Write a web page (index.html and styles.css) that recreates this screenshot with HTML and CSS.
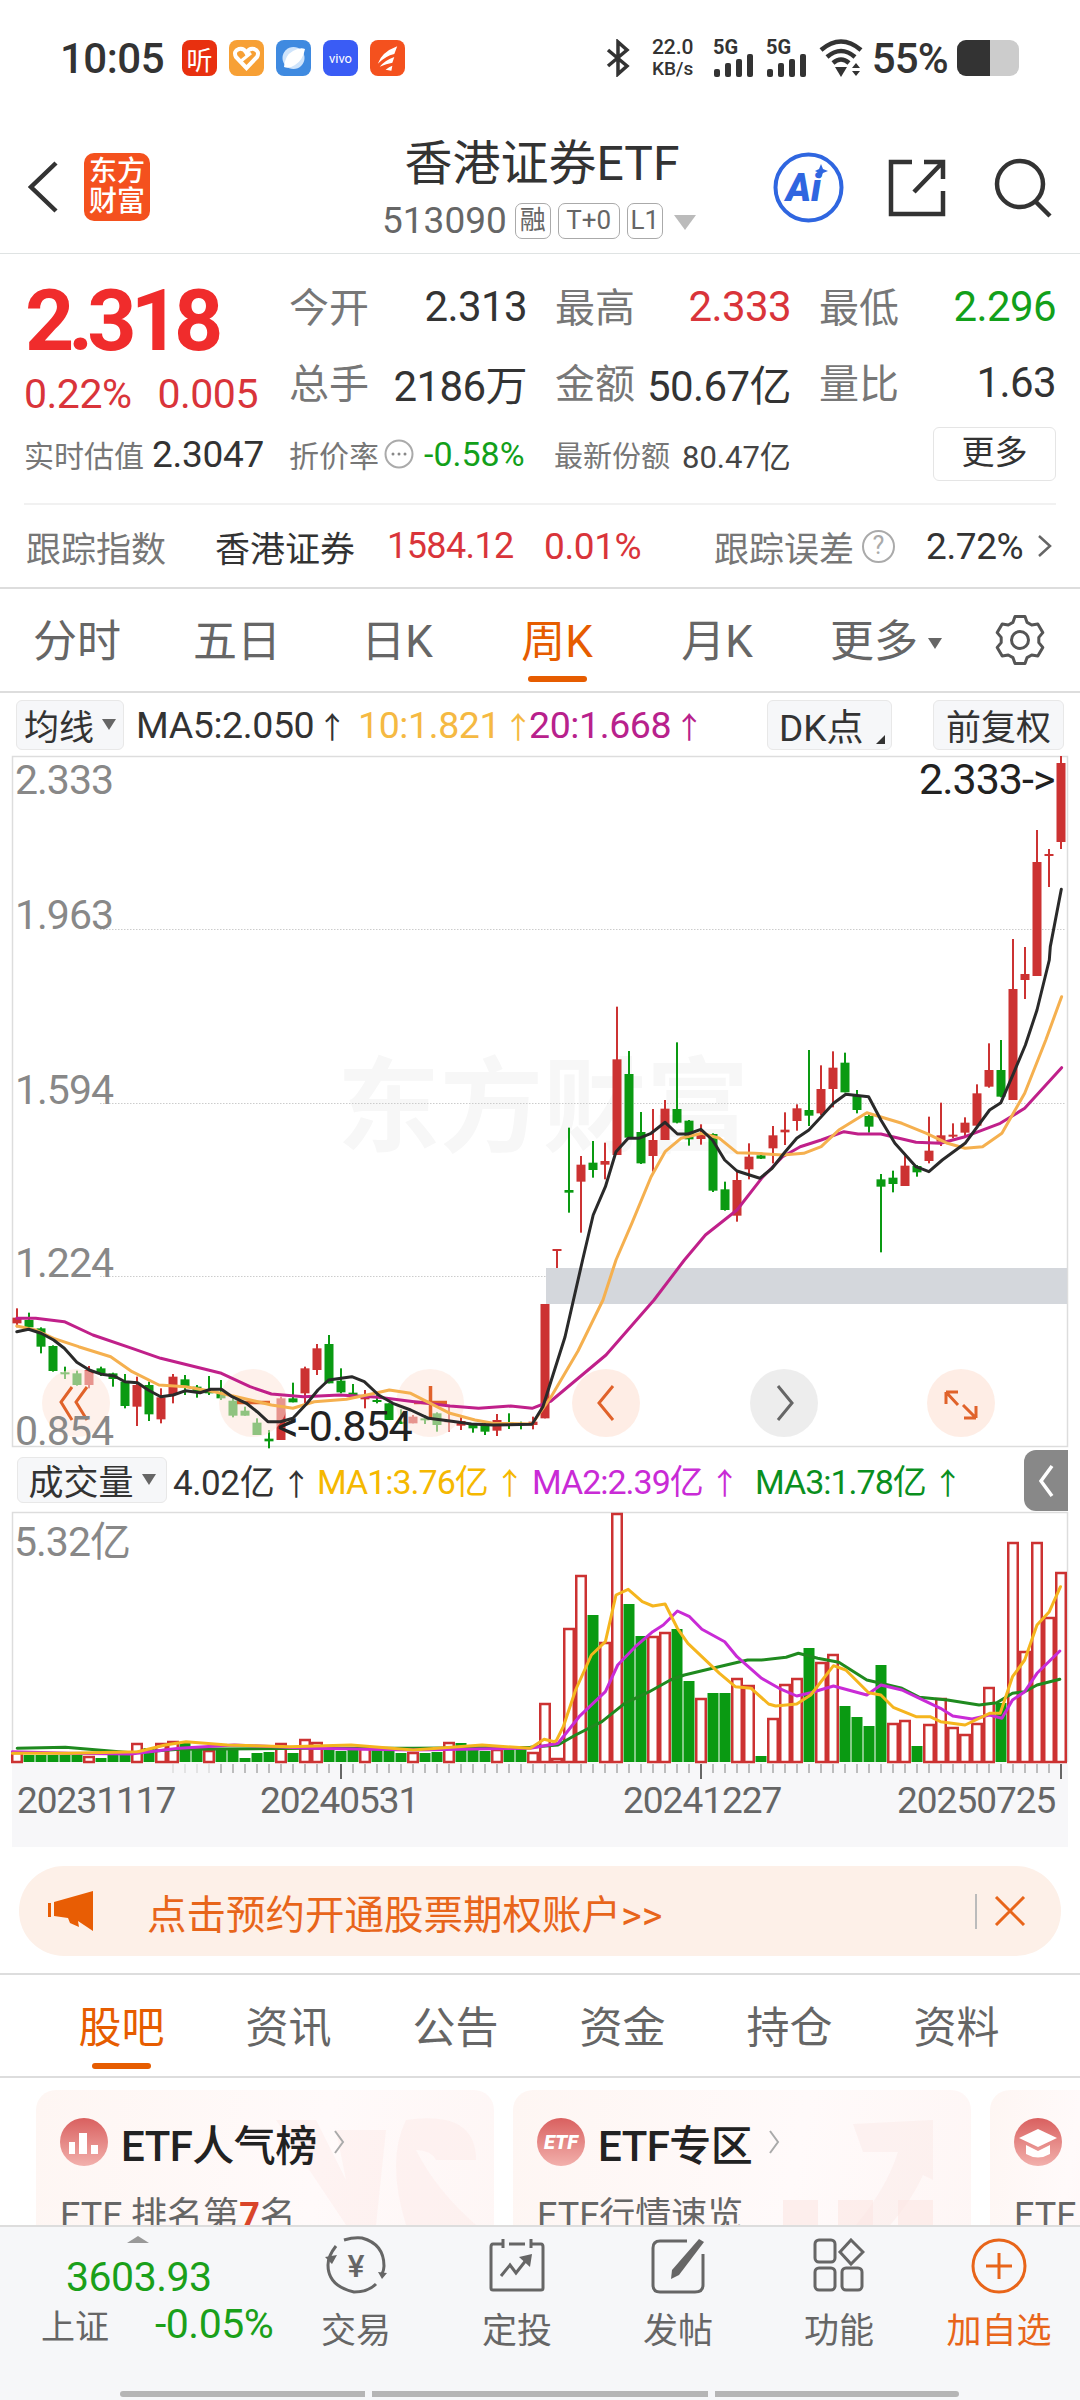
FILE: index.html
```html
<!DOCTYPE html>
<html lang="zh">
<head>
    <meta charset="UTF-8">
    <title>香港证券ETF</title>
    <link rel="stylesheet" href="styles.css">
</head>
<body>
<div class="page">
    <div class="status-bar">
        <div class="status-left">
            <span class="time">10:05</span>
            <span class="app-icon app-ting">听</span>
            <span class="app-icon app-heart">
                <svg width="35" height="36" viewBox="0 0 35 36"><path d="M17.500 28 L7 17 Q4 11 10 9 Q15 8 17.500 13 Q20 8 25 9 Q31 11 28 17 Z" fill="none" stroke="#fff" stroke-width="4"/><path d="M12 21 L22 13" stroke="#fff" stroke-width="3"/></svg>
            </span>
            <span class="app-icon app-ball">
                <svg width="35" height="36" viewBox="0 0 35 36"><circle cx="17.500" cy="18" r="11" fill="#cfe4fb"/><path d="M8 27 Q9 15 17 11 Q24 7 29 9 Q27 20 19 25 Q13 29 8 27 Z" fill="#fff"/></svg>
            </span>
            <span class="app-icon app-vivo">vivo</span>
            <span class="app-icon app-sail">
                <svg width="36" height="36" viewBox="0 0 36 36"><path d="M8 24 Q12 12 28 6 L25 14 Q16 16 8 24 Z M10 27 Q16 20 25 17 L23 23 Q17 24 10 27 Z M16 30 Q20 27 23 26 L22 31 Z" fill="#fff"/></svg>
            </span>
        </div>
        <div class="status-right">
            <svg width="27" height="38" viewBox="0 0 27 38"><path d="M3 11 L22 27 L13 35 L13 3 L22 11 L3 27" fill="none" stroke="#333" stroke-width="3.500"/></svg>
            <span class="net-speed"><b>22.0</b><b class="net-unit">KB/s</b></span>
            <svg class="sim" width="41" height="38" viewBox="0 0 41 38">
                <text x="0" y="15" class="sim-text">5G</text>
                <rect x="1" y="30" width="6" height="8" rx="2"/><rect x="12" y="24" width="6" height="14" rx="2"/><rect x="23" y="20" width="6" height="18" rx="2"/><rect x="34" y="15" width="6" height="23" rx="2"/>
            </svg>
            <svg class="sim" width="41" height="38" viewBox="0 0 41 38">
                <text x="0" y="15" class="sim-text">5G</text>
                <rect x="1" y="30" width="6" height="8" rx="2"/><rect x="12" y="24" width="6" height="14" rx="2"/><rect x="23" y="20" width="6" height="18" rx="2"/><rect x="34" y="15" width="6" height="23" rx="2"/>
            </svg>
            <svg width="44" height="38" viewBox="0 0 44 38"><path d="M2 11 Q22 -6 42 11 M8 18 Q22 6 36 18 M14 24 Q22 17 30 24" fill="none" stroke="#333" stroke-width="4.500"/><path d="M16 28 L28 28 L22 38 Z" fill="#333"/><path d="M37 24 L41 29 L33 29 Z M37 37 L41 32 L33 32 Z" fill="#333"/></svg>
            <span class="battery-text">55%</span>
            <span class="battery"><span class="battery-level"></span></span>
        </div>
    </div>

    <div class="header">
        <svg class="back" width="30" height="52" viewBox="0 0 30 52"><path d="M28 2 L3 26 L28 50" fill="none" stroke="#333" stroke-width="4.500"/></svg>
        <div class="logo">东方<br>财富</div>
        <div class="title-box">
            <div class="title">香港证券ETF</div>
            <div class="subtitle">
                <span class="code">513090</span>
                <span class="tag">融</span><span class="tag tag-wide">T+0</span><span class="tag">L1</span>
                <span class="tri-down"></span>
            </div>
        </div>
        <div class="ai-icon">
            <svg width="71" height="71" viewBox="0 0 71 71"><circle cx="35.500" cy="35.500" r="33" fill="#fff" stroke="#2f66e0" stroke-width="4"/><text x="13" y="49" class="ai-text">Ai</text><path d="M48 12 L50 17 L55 19 L50 21 L48 25 L46 21 L42 19 L46 17 Z" fill="#2f66e0"/></svg>
        </div>
        <svg class="share" width="58" height="58" viewBox="0 0 58 58"><path d="M24 3 L3 3 L3 55 L55 55 L55 32" fill="none" stroke="#333" stroke-width="4.500"/><path d="M26 33 L55 3 M36 3 L55 3 L55 20" fill="none" stroke="#333" stroke-width="4.500"/></svg>
        <svg class="search" width="60" height="60" viewBox="0 0 60 60"><circle cx="27" cy="26" r="23" fill="none" stroke="#333" stroke-width="4.500"/><path d="M43 44 L57 58" stroke="#333" stroke-width="4.500"/></svg>
    </div>

    <div class="quote">
        <div class="quote-top">
            <div class="price-box">
                <div class="price">2.318</div>
                <div class="change"><span>0.22%</span><span>0.005</span></div>
            </div>
            <div class="stats">
                <div class="stat"><span class="stat-label">今开</span><span class="stat-value">2.313</span></div>
                <div class="stat"><span class="stat-label">最高</span><span class="stat-value up">2.333</span></div>
                <div class="stat"><span class="stat-label">最低</span><span class="stat-value down">2.296</span></div>
                <div class="stat"><span class="stat-label">总手</span><span class="stat-value">2186万</span></div>
                <div class="stat"><span class="stat-label">金额</span><span class="stat-value">50.67亿</span></div>
                <div class="stat"><span class="stat-label">量比</span><span class="stat-value">1.63</span></div>
            </div>
        </div>
        <div class="quote-extra">
            <div class="extra-est"><span class="small-label">实时估值</span><span class="extra-num">2.3047</span></div>
            <div class="extra-disc">
                <span class="small-label">折价率</span>
                <svg width="30" height="30" viewBox="0 0 30 30"><circle cx="15" cy="15" r="13.500" fill="none" stroke="#aaa" stroke-width="2"/><circle cx="9" cy="15" r="1.500" fill="#888"/><circle cx="15" cy="15" r="1.500" fill="#888"/><circle cx="21" cy="15" r="1.500" fill="#888"/></svg>
                <span class="extra-rate">-0.58%</span>
            </div>
            <div class="extra-share"><span class="small-label share-label">最新份额</span><span class="share-num">80.47亿</span></div>
            <div class="more-btn">更多</div>
        </div>
    </div>

    <div class="track">
        <span class="track-label">跟踪指数</span>
        <span class="track-name">香港证券</span>
        <span class="track-num track-index up">1584.12</span>
        <span class="track-num up">0.01%</span>
        <span class="track-err">跟踪误差<i class="help">?</i></span>
        <span class="track-num">2.72%</span>
        <svg width="18" height="32" viewBox="0 0 18 32"><path d="M3 6 L14 16 L3 26" fill="none" stroke="#666" stroke-width="2.500"/></svg>
    </div>

    <div class="period-tabs">
        <span class="period">分时</span>
        <span class="period">五日</span>
        <span class="period">日K</span>
        <span class="period period-active">周K</span>
        <span class="period">月K</span>
        <span class="period period-more">更多<i class="tri-small"></i></span>
        <svg class="gear" width="52" height="52" viewBox="-26 -26 52 52">
            <polygon points="-5,-23.500 5,-23.500 7.100,-17.600 11.700,-15 17.800,-16.100 22.800,-7.400 18.800,-2.600 18.800,2.600 22.800,7.400 17.800,16.100 11.700,15 7.100,17.600 5,23.500 -5,23.500 -7.100,17.600 -11.700,15 -17.800,16.100 -22.800,7.400 -18.800,2.600 -18.800,-2.600 -22.800,-7.400 -17.800,-16.100 -11.700,-15 -7.100,-17.600" fill="none" stroke="#555" stroke-width="3" stroke-linejoin="round"/>
            <circle r="8.500" fill="none" stroke="#555" stroke-width="3"/>
        </svg>
    </div>

    <div class="ma-row">
        <span class="select-box box-ma">均线<i class="tri-small"></i></span>
        <span class="ma-item ma-first">MA5:2.050<i class="arrow">↑</i></span>
        <span class="ma-item ma-orange">10:1.821<i class="arrow">↑</i></span>
        <span class="ma-item ma-pink">20:1.668<i class="arrow">↑</i></span>
        <span class="select-box box-dk">DK点<i class="corner"></i></span>
        <span class="select-box box-fq">前复权</span>
    </div>

    <svg class="chart-svg kline-svg" width="1080" height="691" viewBox="0 756 1080 691">
        <rect x="12.500" y="756.500" width="1055" height="690" fill="#fff" stroke="#ddd" stroke-width="1.500"/>
        <text x="337" y="1144" class="watermark">东方财富</text>
        <path d="M100 929.500 H1066 M100 1103.500 H1066 M100 1276.500 H1066" stroke="#ccc" stroke-dasharray="1.500 1.500"/>
        <g id="kline-candles"></g>
        <rect x="546" y="1268" width="521" height="36" fill="#d4d7dc"/>
        <g class="float-btns">
            <ellipse cx="76" cy="1403" rx="34" ry="34" fill="#fde6da" opacity=".55"/>
            <ellipse cx="253" cy="1403" rx="34" ry="34" fill="#fde6da" opacity=".55"/>
            <ellipse cx="430" cy="1403" rx="34" ry="34" fill="#fde6da" opacity=".55"/>
            <ellipse cx="606" cy="1403" rx="34" ry="34" fill="#fde6da" opacity=".7"/>
            <ellipse cx="784" cy="1403" rx="34" ry="34" fill="#e6e6e6" opacity=".7"/>
            <ellipse cx="961" cy="1403" rx="34" ry="34" fill="#fde6da" opacity=".7"/>
            <path d="M72 1387 L61 1402 L72 1420 M87 1387 L76 1402 L87 1420" fill="none" stroke="#e0622a" stroke-width="3"/>
            <path d="M237 1402.500 H270" stroke="#e0622a" stroke-width="3.500"/>
            <path d="M414 1402.500 H447 M430.500 1386 V1418" stroke="#e0622a" stroke-width="3.500"/>
            <path d="M613 1386 L599 1403 L613 1420" fill="none" stroke="#e0622a" stroke-width="3"/>
            <path d="M778 1386 L792 1403 L778 1420" fill="none" stroke="#666" stroke-width="3"/>
            <path d="M946 1392 L946 1404 M946 1392 L958 1392 M946 1392 L958 1405 M976 1418 L976 1406 M976 1418 L964 1418 M976 1418 L963 1405" fill="none" stroke="#e0622a" stroke-width="3"/>
        </g>
        <g id="kline-lines"></g>
        <g class="axis-labels">
            <text x="15" y="794">2.333</text>
            <text x="15" y="929">1.963</text>
            <text x="15" y="1104">1.594</text>
            <text x="15" y="1277">1.224</text>
            <text x="15" y="1445">0.854</text>
        </g>
        <text x="919" y="794" class="extreme">2.333-&gt;</text>
        <text x="277" y="1441" class="extreme">&lt;-0.854</text>
    </svg>

    <div class="vol-row">
        <span class="select-box box-vol">成交量<i class="tri-small"></i></span>
        <span class="ma-item vol-now">4.02亿<i class="arrow">↑</i></span>
        <span class="ma-item vol-ma1">MA1:3.76亿<i class="arrow">↑</i></span>
        <span class="ma-item vol-ma2">MA2:2.39亿<i class="arrow">↑</i></span>
        <span class="ma-item vol-ma3">MA3:1.78亿<i class="arrow">↑</i></span>
        <span class="collapse-tab">
            <svg width="18" height="36" viewBox="0 0 18 36"><path d="M15 3 L4 18 L15 33" fill="none" stroke="#fff" stroke-width="3.500"/></svg>
        </span>
    </div>

    <svg class="chart-svg vol-svg" width="1080" height="335" viewBox="0 1512 1080 335">
        <rect x="12" y="1762" width="1056" height="85" fill="#f7f7f9"/>
        <path d="M12.500 1762 V1512.500 H1067.500 V1762" fill="#fff" stroke="#ddd" stroke-width="1.500"/>
        <g id="vol-bars"></g>
        <g id="vol-lines"></g>
        <g id="vol-ticks"></g>
        <text x="14" y="1556" class="axis-vol">5.32亿</text>
        <g class="date-labels">
            <text x="17" y="1813">20231117</text>
            <text x="260" y="1813">20240531</text>
            <text x="623" y="1813">20241227</text>
            <text x="897" y="1813">20250725</text>
        </g>
    </svg>

    <div class="banner">
        <svg class="horn" width="46" height="40" viewBox="0 0 46 40"><path d="M0 12 H3 V26 H0 Z M6 11 L45 0 V40 L30 30 L31 36 L22 32 L20 27 L6 25 Z" fill="#e85d04"/></svg>
        <span class="banner-text">点击预约开通股票期权账户&gt;&gt;</span>
        <span class="banner-line"></span>
        <svg width="32" height="30" viewBox="0 0 32 30"><path d="M2 1 L30 29 M30 1 L2 29" stroke="#e8651a" stroke-width="3"/></svg>
    </div>

    <div class="info-tabs">
        <span class="info-tab info-active">股吧</span>
        <span class="info-tab">资讯</span>
        <span class="info-tab">公告</span>
        <span class="info-tab">资金</span>
        <span class="info-tab">持仓</span>
        <span class="info-tab">资料</span>
    </div>

    <div class="cards">
        <div class="card">
            <svg class="card-bg" width="458" height="135" viewBox="0 0 458 135"><path d="M240 30 L310 135 L340 135 L350 40 L300 40 L310 90 L280 30 Z M370 30 Q440 20 440 70 L400 70 Q395 60 380 60 Q400 100 440 135 L370 135 Q350 70 370 30 Z" fill="#fbe6e3" opacity=".35"/></svg>
            <div class="card-title">
                <span class="card-icon">
                    <svg width="48" height="48" viewBox="0 0 48 48"><path d="M9 36 V24 H15 V36 Z M19 36 V15 H27 V36 Z M31 36 V27 H38 V36 Z" fill="#fff"/></svg>
                </span>
                <span class="card-name">ETF人气榜</span>
                <svg width="12" height="26" viewBox="0 0 12 26"><path d="M2 2 L10 13 L2 24" fill="none" stroke="#aaa" stroke-width="2"/></svg>
            </div>
            <div class="card-sub">ETF 排名第<b>7</b>名</div>
        </div>
        <div class="card">
            <svg class="card-bg" width="458" height="135" viewBox="0 0 458 135"><path d="M340 34 L420 30 L420 90 L410 85 Q390 130 340 170 L320 160 Q370 110 385 62 L350 62 Z" fill="#fbe6e3" opacity=".4"/><path d="M270 110 H305 V135 H270 Z M325 110 H360 V135 H325 Z M385 110 H420 V135 H385 Z" fill="#fbe6e3" opacity=".6"/></svg>
            <div class="card-title">
                <span class="card-icon"><i class="etf-mark">ETF</i></span>
                <span class="card-name">ETF专区</span>
                <svg width="12" height="26" viewBox="0 0 12 26"><path d="M2 2 L10 13 L2 24" fill="none" stroke="#aaa" stroke-width="2"/></svg>
            </div>
            <div class="card-sub">ETF行情速览</div>
        </div>
        <div class="card card-cut">
            <div class="card-title">
                <span class="card-icon">
                    <svg width="48" height="48" viewBox="0 0 48 48"><path d="M5 20 L24 11 L43 20 L24 29 Z" fill="#fff"/><path d="M12 27 L24 33 L36 27 V36 Q24 43 12 36 Z" fill="#fff"/></svg>
                </span>
            </div>
            <div class="card-sub">ETF</div>
        </div>
    </div>

    <div class="bottom-bar">
        <div class="index-box">
            <i class="tri-up"></i>
            <div class="index-num">3603.93</div>
            <div class="index-row"><span class="index-name">上证</span><span class="index-rate">-0.05%</span></div>
        </div>
        <div class="nav-item nav-trade">
            <svg width="64" height="58" viewBox="0 0 64 58"><path d="M12 10 Q4 20 4 29 Q4 50 30 56 Q44 56 52 48" fill="none" stroke="#666" stroke-width="3"/><path d="M20 4 Q30 1 38 2 Q60 8 60 30 Q60 34 58 38" fill="none" stroke="#666" stroke-width="3"/><path d="M1 21 L8 28 L13 19 Z M54 36 L63 37 L58 43 Z" fill="#666"/><text x="32" y="41" class="yen">¥</text></svg>
            <span>交易</span>
        </div>
        <div class="nav-item nav-plan">
            <svg width="56" height="54" viewBox="0 0 56 54"><path d="M14 6 H4 Q2 6 2 9 V50 Q2 52 4 52 H52 Q54 52 54 50 V9 Q54 6 52 6 H42 M20 6 H36 M14 1 V10 M42 1 V10" fill="none" stroke="#666" stroke-width="3"/><path d="M12 38 L21 27 L27 35 L38 21" fill="none" stroke="#666" stroke-width="3"/><path d="M30 19 L43 16 L41 29 Z" fill="#666"/></svg>
            <span>定投</span>
        </div>
        <div class="nav-item nav-post">
            <svg width="54" height="56" viewBox="0 0 54 56"><path d="M36 3 H9 Q2 3 2 10 V47 Q2 54 9 54 H44 Q52 54 52 47 V16" fill="none" stroke="#666" stroke-width="3"/><path d="M48 1 L53 4 L28 37 L20 41 L21 32 Z" fill="#666"/></svg>
            <span>发帖</span>
        </div>
        <div class="nav-item nav-func">
            <svg width="52" height="54" viewBox="0 0 52 54"><rect x="2" y="2" width="20" height="22" rx="4" fill="none" stroke="#666" stroke-width="3"/><path d="M38 2 L50 14 L38 26 L27 14 Z" fill="none" stroke="#666" stroke-width="3"/><rect x="2" y="30" width="20" height="22" rx="4" fill="none" stroke="#666" stroke-width="3"/><rect x="29" y="30" width="20" height="22" rx="4" fill="none" stroke="#666" stroke-width="3"/></svg>
            <span>功能</span>
        </div>
        <div class="nav-item nav-add">
            <svg width="56" height="56" viewBox="0 0 56 56"><circle cx="28" cy="28" r="26" fill="none" stroke="#e8651a" stroke-width="3"/><path d="M15 28 H41 M28 15 V41" stroke="#e8651a" stroke-width="3"/></svg>
            <span>加自选</span>
        </div>
        <div class="home-bar"><i></i><i></i><i></i></div>
    </div>
</div>
<script src="chart.js"></script>
</body>
</html>
```

FILE: styles.css
```css
* {
    box-sizing: border-box;
}

html, body {
    margin: 0;
    padding: 0;
    background: #fff;
}

body {
    font-family: Roboto, "Noto Sans CJK SC", sans-serif;
    color: #333;
}

i {
    font-style: normal;
}

.page {
    width: 1080px;
    height: 2400px;
    overflow: hidden;
    display: flex;
    flex-direction: column;
}

.up {
    color: #d9343a;
}

.down {
    color: #12a01a;
}

/* status bar */
.status-bar {
    height: 116px;
    flex: none;
    display: flex;
    align-items: center;
    justify-content: space-between;
    padding: 0 61px 0 60px;
}

.status-left,
.status-right {
    display: flex;
    align-items: center;
}

.time {
    font-size: 42px;
    font-weight: 500;
    width: 122px;
    letter-spacing: -.5px;
}

.app-icon {
    width: 35px;
    height: 36px;
    border-radius: 8px;
    margin-right: 12px;
    display: flex;
    align-items: center;
    justify-content: center;
    color: #fff;
}

.app-ting {
    background: #e8300f;
    font-size: 26px;
}

.app-heart {
    background: #f7a035;
}

.app-ball {
    background: #3f8ae0;
}

.app-vivo {
    background: #3a5cf5;
    font-size: 13px;
}

.app-sail {
    background: #f4511e;
    margin-right: 0;
}

.net-speed {
    display: flex;
    flex-direction: column;
    align-items: center;
    width: 44px;
    margin: 0 18px 0 19px;
    font-size: 21px;
    line-height: 21px;
}

.net-speed b {
    font-weight: 500;
}

.net-speed .net-unit {
    font-size: 19px;
}

.sim {
    margin-right: 12px;
    fill: #333;
    overflow: visible;
}

.sim-text {
    font-size: 20px;
    font-weight: 700;
}

.battery-text {
    font-size: 42px;
    font-weight: 500;
    margin: 0 9px 0 9px;
    letter-spacing: -.8px;
}

.battery {
    width: 62px;
    height: 36px;
    border-radius: 9px;
    background: #ccc;
    overflow: hidden;
}

.battery-level {
    display: block;
    width: 33px;
    height: 36px;
    background: #333;
}

/* header */
.header {
    height: 138px;
    flex: none;
    display: flex;
    align-items: flex-start;
    padding: 0 30px 0 28px;
    border-bottom: 1.5px solid #dfe3e3;
}

.back {
    margin-top: 45px;
    flex: none;
}

.logo {
    flex: none;
    width: 66px;
    height: 68px;
    margin: 37px 0 0 26px;
    padding-top: 4px;
    background: #f4511e;
    border-radius: 10px;
    color: #fff;
    font-size: 28px;
    font-weight: 500;
    line-height: 30px;
    text-align: center;
}

.title-box {
    width: 462px;
    margin-left: 161px;
    text-align: center;
    flex: none;
}

.title {
    font-size: 48px;
    line-height: 56px;
    margin-top: 20px;
}

.subtitle {
    display: flex;
    align-items: center;
    margin: 11px 0 0 71px;
    color: #666;
}

.code {
    font-size: 37px;
    line-height: 36px;
    margin-right: 8px;
}

.tag {
    width: 36px;
    height: 36px;
    border: 1.5px solid #aaa;
    border-radius: 7px;
    margin-right: 7px;
    font-size: 26px;
    line-height: 32px;
    text-align: center;
    color: #666;
    flex: none;
}

.tag-wide {
    width: 62px;
}

.tri-down {
    width: 0;
    height: 0;
    margin: 2px 0 0 4px;
    border-left: 11px solid transparent;
    border-right: 11px solid transparent;
    border-top: 15px solid #bbb;
}

.ai-icon {
    margin-top: 36px;
    height: 71px;
    flex: none;
}

.ai-text {
    font-size: 38px;
    font-weight: 900;
    font-style: italic;
    fill: #2f66e0;
}

.share {
    margin: 43px 0 0 44px;
    flex: none;
}

.search {
    margin: 42px 0 0 47px;
    flex: none;
}

/* quote */
.quote {
    flex: none;
    height: 251px;
    margin: 0 24px;
    border-bottom: 2px solid #f1f1f1;
}

.quote-top {
    display: flex;
    height: 165px;
}

.price-box {
    width: 265px;
    padding-top: 17px;
}

.price {
    font-size: 86px;
    font-weight: 700;
    line-height: 100px;
    letter-spacing: -6px;
    color: #f02c2c;
    padding-left: 1px;
}

.change {
    display: flex;
    gap: 26px;
    font-size: 41px;
    line-height: 46px;
    letter-spacing: -.5px;
    color: #d9343a;
}

.stats {
    width: 767px;
    padding-top: 13px;
    display: grid;
    grid-template-columns: 238px 236px 237px;
    grid-auto-rows: 76px;
    column-gap: 28px;
}

.stat {
    display: flex;
    align-items: center;
    justify-content: space-between;
}

.stat-label {
    font-size: 40px;
    color: #777;
}

.stat-value {
    font-size: 42px;
    letter-spacing: -.6px;
    padding-top: 2px;
}

.quote-extra {
    display: flex;
    align-items: center;
    height: 70px;
}

.small-label {
    font-size: 30px;
    color: #777;
}

.extra-est {
    width: 265px;
    display: flex;
    align-items: center;
    gap: 8px;
}

.extra-num {
    font-size: 37px;
    letter-spacing: -.3px;
}

.extra-disc {
    width: 265px;
    display: flex;
    align-items: center;
    gap: 5px;
}

.extra-rate {
    font-size: 34px;
    color: #12a01a;
    margin-left: 5px;
}

.extra-share {
    width: 379px;
    display: flex;
    align-items: center;
}

.share-label {
    font-size: 29px;
    width: 128px;
}

.share-num {
    font-size: 31px;
    color: #444;
}

.more-btn {
    width: 123px;
    height: 54px;
    border: 1.5px solid #e5e5e5;
    border-radius: 6px;
    font-size: 33px;
    line-height: 50px;
    text-align: center;
}

/* tracking row */
.track {
    flex: none;
    height: 84px;
    display: grid;
    grid-template-columns: 189px 172px 157px 170px 212px 110px 18px;
    align-items: center;
    padding-left: 26px;
    border-bottom: 2px solid #ddd;
}

.track-label,
.track-err {
    font-size: 35px;
    color: #777;
    display: flex;
    align-items: center;
}

.track-name {
    font-size: 35px;
}

.track-num {
    font-size: 37px;
    letter-spacing: -.4px;
}

.track-index {
    font-size: 36px;
    letter-spacing: -.6px;
}

.help {
    width: 33px;
    height: 33px;
    margin-left: 8px;
    border: 2.5px solid #aaa;
    border-radius: 50%;
    font-size: 25px;
    line-height: 28px;
    text-align: center;
    color: #aaa;
}

/* period tabs */
.period-tabs {
    flex: none;
    height: 104px;
    display: flex;
    align-items: center;
    margin-left: -3px;
    border-bottom: 2px solid #ddd;
}

.period {
    width: 160px;
    height: 102px;
    font-size: 44px;
    line-height: 106px;
    text-align: center;
    color: #666;
    position: relative;
    flex: none;
}

.period-active {
    color: #e65c00;
}

.period-active::after {
    content: "";
    position: absolute;
    left: 51px;
    top: 87px;
    width: 59px;
    height: 6px;
    border-radius: 3px;
    background: #e65c00;
}

.period-more {
    margin-left: 9px;
}

.tri-small {
    display: inline-block;
    margin-left: 10px;
    vertical-align: 8px;
    border-left: 7px solid transparent;
    border-right: 7px solid transparent;
    border-top: 11px solid #666;
}

.gear {
    margin-left: 28px;
    flex: none;
}

/* MA rows */
.ma-row,
.vol-row {
    flex: none;
    display: flex;
    align-items: center;
    position: relative;
}

.ma-row {
    height: 63px;
    font-size: 37.500px;
}

.vol-row {
    height: 65px;
    font-size: 34px;
}

.select-box {
    flex: none;
    height: 50px;
    background: #f6f7f9;
    border: 1.5px solid #e8e8e8;
    border-radius: 6px;
    display: flex;
    align-items: center;
    justify-content: center;
    color: #333;
    position: relative;
    font-size: 35px;
}

.box-ma {
    width: 108px;
    margin-left: 16px;
}

.box-ma .tri-small,
.box-vol .tri-small {
    margin-left: 8px;
    vertical-align: baseline;
}

.box-dk {
    width: 125px;
    position: absolute;
    left: 767px;
    font-size: 37px;
    justify-content: flex-start;
    padding-left: 11px;
}

.corner {
    position: absolute;
    right: 6px;
    bottom: 5px;
    border-left: 9px solid transparent;
    border-bottom: 9px solid #333;
}

.box-fq {
    width: 131px;
    position: absolute;
    left: 933px;
}

.ma-item {
    white-space: nowrap;
    letter-spacing: -.4px;
}

.arrow {
    font-size: 30px;
    margin-left: 3px;
}

.ma-first {
    margin-left: 12px;
    width: 222px;
}

.ma-orange {
    color: #f5b942;
    width: 171px;
}

.ma-pink {
    color: #b8218c;
}

.chart-svg {
    display: block;
    flex: none;
    overflow: visible;
}

.watermark {
    font-size: 103px;
    font-weight: 700;
    fill: #f7f7f7;
}

.axis-labels text,
.axis-vol {
    font-size: 41px;
    letter-spacing: -1px;
    fill: #888;
}

.extreme {
    font-size: 43px;
    letter-spacing: -1px;
    fill: #222;
}

.box-vol {
    width: 150px;
    height: 46px;
    margin-left: 17px;
}

.vol-now {
    margin-left: 6px;
    width: 144px;
    font-size: 35px;
}

.vol-ma1,
.vol-ma2,
.vol-ma3 {
    letter-spacing: -1px;
}

.vol-row .arrow {
    margin-left: 7px;
}

.vol-ma1 {
    color: #f5b800;
    width: 215px;
}

.vol-ma2 {
    color: #c92bd6;
    width: 223px;
}

.vol-ma3 {
    color: #0a8f1e;
}

.collapse-tab {
    position: absolute;
    left: 1024px;
    top: 3px;
    width: 44px;
    height: 61px;
    background: #888;
    border-radius: 12px 0 0 12px;
    display: flex;
    align-items: center;
    justify-content: center;
}

.date-labels text {
    font-size: 37px;
    letter-spacing: -1px;
    fill: #666;
}

/* banner */
.banner {
    flex: none;
    height: 90px;
    margin: 19px 19px 0;
    padding-left: 29px;
    background: #fdf0e8;
    border-radius: 45px;
    display: flex;
    align-items: center;
}

.horn {
    margin-right: 53px;
}

.banner-text {
    width: 828px;
    font-size: 39.500px;
    color: #e8651a;
}

.banner-line {
    width: 1.500px;
    height: 35px;
    background: #bbb;
    margin-right: 17px;
}

/* info tabs */
.info-tabs {
    flex: none;
    height: 105px;
    margin-top: 17px;
    padding-left: 38px;
    display: flex;
    border-top: 2px solid #ddd;
    border-bottom: 2px solid #ddd;
}

.info-tab {
    width: 167px;
    font-size: 43px;
    line-height: 106px;
    text-align: center;
    color: #666;
    position: relative;
}

.info-active {
    color: #e65c00;
}

.info-active::after {
    content: "";
    position: absolute;
    left: 54px;
    top: 88px;
    width: 59px;
    height: 6px;
    border-radius: 3px;
    background: #e65c00;
}

/* cards */
.cards {
    flex: none;
    height: 147px;
    padding: 12px 0 0 36px;
    display: flex;
    gap: 19px;
    overflow: hidden;
}

.card {
    flex: none;
    width: 458px;
    height: 200px;
    padding: 28px 0 0 24px;
    border-radius: 20px;
    background: linear-gradient(100deg, #fef6f3, #fffafa 60%, #fef6f5);
    position: relative;
}

.card-bg {
    position: absolute;
    left: 0;
    top: 0;
}

.card-cut {
    width: 120px;
}

.card-title {
    display: flex;
    align-items: center;
    height: 48px;
    position: relative;
}

.card-icon {
    width: 48px;
    height: 48px;
    border-radius: 50%;
    background: linear-gradient(#d9605f, #f2b0ac);
    flex: none;
    display: flex;
    align-items: center;
    justify-content: center;
}

.etf-mark {
    font-size: 20px;
    font-weight: 900;
    font-style: italic;
    color: #fff;
}

.card-name {
    margin: 0 16px 0 13px;
    font-size: 42px;
    font-weight: 500;
    letter-spacing: -.5px;
    color: #222;
}

.card-sub {
    margin-top: 28px;
    font-size: 36px;
    line-height: 44px;
    color: #666;
    position: relative;
}

.card-sub b {
    color: #d9452a;
}

/* bottom bar */
.bottom-bar {
    flex: 1;
    position: relative;
    display: flex;
    background: #f6f7f9;
    border-top: 2px solid #ddd;
}

.index-box {
    width: 322px;
    padding-left: 41px;
    position: relative;
}

.tri-up {
    position: absolute;
    left: 127px;
    top: 9px;
    border-left: 11px solid transparent;
    border-right: 11px solid transparent;
    border-bottom: 7px solid #999;
}

.index-num {
    margin: 28px 0 0 25px;
    font-size: 41px;
    line-height: 44px;
    letter-spacing: -.5px;
    color: #1aa01a;
}

.index-row {
    display: flex;
    align-items: center;
    height: 50px;
}

.index-name {
    font-size: 34px;
    width: 114px;
    color: #666;
}

.index-rate {
    font-size: 41px;
    letter-spacing: -.5px;
    color: #1aa01a;
}

.nav-item {
    position: absolute;
    top: 9px;
    display: flex;
    flex-direction: column;
    align-items: center;
    font-size: 35px;
    color: #666;
}

.nav-item span {
    position: absolute;
    top: 72px;
    white-space: nowrap;
    line-height: 48px;
}

.nav-trade {
    left: 324px;
}

.nav-plan {
    left: 489px;
    top: 11px;
}

.nav-post {
    left: 651px;
    top: 11px;
}

.nav-func {
    left: 813px;
    top: 11px;
}

.nav-add {
    left: 971px;
    top: 11px;
    color: #e8651a;
}

.nav-plan span,
.nav-post span,
.nav-func span,
.nav-add span {
    top: 70px;
}

.yen {
    font-size: 32px;
    font-weight: 500;
    fill: #666;
    text-anchor: middle;
}

.home-bar {
    position: absolute;
    left: 120px;
    top: 164px;
    display: flex;
    gap: 7px;
}

.home-bar i {
    display: block;
    width: 336px;
    height: 6px;
    background: #b5b5b5;
}

.home-bar i:first-child {
    width: 245px;
    border-radius: 3px 0 0 3px;
}

.home-bar i:last-child {
    width: 244px;
    border-radius: 0 3px 3px 0;
}
```

FILE: chart.js
```js
const RED = '#cc3232';
const GREEN = '#0a9a12';

// candle rows: colour, high, body top, body bottom, low (traced in 1/3 px above a base y)
const leftCandles = [
    ['r',205,233,250,262],['g',218,240,262,270],['g',262,265,320,340],['g',316,318,393,395],['g',380,397,402,417],
    ['g',392,400,435,437],['r',378,390,435,445],['g',380,385,400,408],['g',398,400,417,440],['g',402,425,498,505],
    ['r',410,435,500,558],['g',425,435,523,543],['r',445,472,538,550],['r',402,410,465,490],['g',405,418,438,465],
    ['g',435,440,458,473],['g',408,452,460,465],['g',420,460,475,480],['g',475,482,527,532],['g',500,512,527,527],
    ['g',535,548,585,585],['g',570,596,604,625],['r',470,475,600,600],['g',428,475,487,487],['r',380,385,460,490],
    ['r',312,325,390,405],['g',285,312,430,430],['g',385,422,457,460],['g',432,458,465,467],['r',450,472,475,505],
    ['g',465,480,483,490],['g',490,490,540,540],['g',508,545,548,552],['r',525,530,550,550],['g',525,535,540,552],
    ['g',517,520,555,575],['r',495,540,547,575],['r',530,543,557,570],['g',550,553,565,578],['g',548,555,575,585],
    ['r',522,540,572,588],['g',520,547,549,567],['g',545,549,551,568],['r',530,545,555,568],['r',192,192,535,535]
];
const rightCandles = [
    ['r',867,867,873,924],['g',503,690,698,758],['r',588,614,665,818],['g',543,608,630,653],['r',548,603,614,658],
    ['r',140,298,585,585],['g',273,342,533,533],['g',456,516,610,612],['r',447,540,588,635],['r',420,446,540,540],
    ['g',247,447,488,490],['g',480,482,538,557],['r',493,525,537,554],['g',520,522,692,696],['g',665,688,750,752],
    ['r',635,660,767,785],['r',550,590,628,658],['g',578,586,596,597],['r',498,526,565,610],['r',457,509,517,555],
    ['r',433,445,483,512],['g',270,450,467,498],['r',316,387,460,465],['r',274,323,387,442],['g',278,308,397,397],
    ['g',390,405,450,460],['g',460,468,500,518],['g',642,658,680,877],['g',632,653,672,697],['r',580,617,678,678],
    ['g',615,618,637,650],['r',470,572,603,610],['r',428,526,545,558],['r',490,524,529,535],['r',472,488,518,530],
    ['r',373,400,497,497],['r',250,330,380,383],['g',240,330,410,412],['r',-63,87,420,420],['r',-39,42,60,117],
    ['r',-390,-294,48,48],['r',-333,-318,-312,-219],['r',-612,-591,-354,-333]
];

// volume bar tops, page px
const volumes = [
    ['r',1752],['g',1755],['g',1755],['g',1755],['g',1755],['g',1755],['r',1756],['g',1758],['g',1755],['g',1755],
    ['r',1743],['g',1748],['r',1743],['r',1741],['g',1742],['g',1750],['r',1750],['g',1748],['g',1749],['g',1758],
    ['g',1753],['g',1752],['r',1743],['g',1753],['r',1739],['r',1742],['g',1748],['g',1751],['g',1748],['r',1748],
    ['g',1748],['g',1751],['g',1753],['r',1752],['g',1753],['g',1752],['r',1742],['g',1743],['g',1750],['g',1751],
    ['r',1749],['g',1746],['g',1748],['r',1752],['r',1703],['r',1758],['r',1628],['r',1575],['g',1615],['r',1642],
    ['r',1513],['g',1604],['g',1636],['r',1636],['r',1632],['g',1629],['g',1681],['r',1698],['g',1693],['g',1693],
    ['r',1678],['r',1685],['g',1756],['r',1718],['r',1684],['r',1678],['g',1648],['r',1662],['r',1654],['g',1706],
    ['g',1717],['g',1726],['g',1665],['r',1723],['r',1720],['g',1746],['r',1724],['r',1698],['r',1727],['r',1734],
    ['r',1723],['r',1687],['g',1703],['r',1542],['r',1651],['r',1542],['r',1617],['r',1572]
];

// traced line points, each block has its own scale
function trace(points, sx, ox, sy, oy) {
    return points.map(p => [ox + p[0] / sx, oy + p[1] / sy]);
}

const ma5 = [].concat(
    trace([[47,275],[80,268],[115,280],[150,300],[180,325],[215,367],[250,390],[285,403],[320,408],[350,425],[385,428],[415,450],[450,470],[485,465],[520,452],[560,458],[590,448],[620,448],[650,470],[690,490],[720,515],[750,545],[785,545],[820,535],[860,490],[890,450],[920,420],[985,410],[1020,425],[1060,465],[1100,490],[1150,510],[1200,535],[1260,543],[1320,552],[1380,555],[1490,553],[1520,500]], 2.8, 0, 3, 1240),
    [[565,1337]],
    trace([[150,900],[180,765],[215,680],[245,575],[280,535],[310,535],[345,520],[385,487],[420,522],[450,522],[487,508],[520,540],[555,600],[590,633],[655,655],[690,625],[725,578],[760,535],[795,510],[830,470],[865,430],[900,403],[965,410],[1000,480],[1040,550],[1100,620],[1137,635],[1175,600],[1240,550],[1310,450],[1342,428],[1378,340],[1412,255],[1445,150],[1480,0]], 2.85, 530, 3, 960),
    trace([[1525,450],[1541,325]], 1.452, 0, 2.178, 740)
);
const ma10 = [].concat(
    trace([[47,258],[100,270],[150,295],[220,320],[310,350],[370,395],[445,435],[520,440],[600,455],[680,475],[760,495],[820,505],[880,485],[970,478],[1050,460],[1090,450],[1150,460],[1205,490],[1260,520],[1330,540],[1380,550],[1490,552]], 2.8, 0, 3, 1240),
    [[551,1397],[578,1351],[603,1300]],
    trace([[245,900],[290,790],[345,650],[385,575],[430,535],[490,520],[540,535],[590,578],[640,580],[720,585],[780,580],[830,560],[880,510],[960,458],[1060,490],[1130,520],[1190,550],[1240,565],[1290,560],[1345,520],[1410,400],[1470,240],[1515,110]], 2.85, 530, 3, 960)
);
const ma20 = [].concat(
    trace([[47,235],[100,235],[180,245],[260,285],[370,325],[450,355],[620,400],[700,440],[760,462],[850,470],[950,465],[1060,472],[1160,485],[1260,498],[1340,505],[1430,498],[1490,505]], 2.8, 0, 3, 1240),
    [[551,1401],[606,1355],[654,1300]],
    trace([[440,900],[500,825],[590,750],[660,655],[720,590],[770,560],[830,540],[895,515],[935,522],[1000,522],[1100,547],[1170,550],[1240,530],[1340,490],[1410,445],[1515,323]], 2.85, 530, 3, 960)
);

const volMa1 = [].concat(
    trace([[18,940],[100,940],[200,935],[240,915],[270,905],[330,915],[420,920],[510,915],[600,930],[700,915],[770,925],[790,898],[805,905]], 1.452, 0, 3, 1440),
    trace([[75,722],[95,680],[130,570],[175,465],[215,425],[245,285],[280,268],[320,305],[350,318],[385,312],[420,385],[450,430],[540,520],[585,560],[630,565],[680,612],[700,618],[760,612],[800,585],[865,497],[900,510],[965,578],[1000,585],[1035,622],[1100,650],[1140,650],[1170,665],[1240,675],[1310,640],[1340,640],[1375,530],[1410,480],[1445,375],[1480,335],[1512,260]], 2.85, 530, 3, 1500)
);
const volMa2 = [].concat(
    trace([[18,935],[100,940],[190,942],[260,925],[340,915],[450,925],[600,930],[770,925],[805,912]], 1.452, 0, 3, 1440),
    trace([[80,730],[140,650],[215,575],[250,495],[300,440],[350,395],[380,375],[420,333],[455,350],[490,388],[555,425],[590,470],[660,535],[710,565],[760,588],[800,578],[865,558],[960,585],[1000,555],[1060,570],[1110,595],[1170,625],[1205,648],[1260,657],[1310,645],[1345,655],[1375,600],[1410,575],[1445,520],[1510,453]], 2.85, 530, 3, 1500)
);
const volMa3 = [].concat(
    trace([[25,925],[95,922],[190,938],[260,928],[450,925],[600,925],[770,922],[810,915]], 1.452, 0, 3, 1440),
    trace([[130,705],[205,665],[270,610],[340,575],[400,540],[440,525],[520,505],[620,480],[660,480],[730,472],[765,460],[820,475],[880,487],[960,540],[1000,550],[1060,565],[1110,592],[1190,600],[1280,615],[1330,608],[1375,580],[1410,575],[1445,555],[1510,538]], 2.85, 530, 3, 1500)
);

function polyline(points, color, width) {
    const pts = points.map(p => p[0].toFixed(1) + ',' + p[1].toFixed(1)).join(' ');
    return `<polyline points="${pts}" fill="none" stroke="${color}" stroke-width="${width}" stroke-linejoin="round" stroke-linecap="round"/>`;
}

function candleSvg(row, index, base) {
    const x = 17 + 12 * index;
    const color = row[0] === 'r' ? RED : GREEN;
    const high = base + row[1] / 3;
    const top = base + row[2] / 3;
    const bottom = base + row[3] / 3;
    const low = base + row[4] / 3;
    return `<rect x="${x - 1}" y="${high}" width="2" height="${low - high}" fill="${color}"/>` +
        `<rect x="${x - 4.5}" y="${top}" width="9" height="${Math.max(bottom - top, 2)}" fill="${color}"/>`;
}

let candles = '';
leftCandles.forEach((row, i) => { candles += candleSvg(row, i, 1240); });
rightCandles.forEach((row, i) => { candles += candleSvg(row, i + leftCandles.length, 960); });
document.getElementById('kline-candles').innerHTML = candles;

document.getElementById('kline-lines').innerHTML =
    polyline(ma20, '#c0208a', 3) + polyline(ma10, '#f5b04f', 3) + polyline(ma5, '#2a2a2a', 3);

let bars = '';
volumes.forEach((v, i) => {
    const x = 17 + 12 * i;
    if (v[0] === 'r') {
        bars += `<rect x="${x - 4.75}" y="${v[1] + 1}" width="9.5" height="${1761 - v[1]}" fill="#fff" stroke="${RED}" stroke-width="2.5"/>`;
    } else {
        bars += `<rect x="${x - 5.5}" y="${v[1]}" width="11" height="${1762 - v[1]}" fill="${GREEN}"/>`;
    }
});
document.getElementById('vol-bars').innerHTML = bars;

document.getElementById('vol-lines').innerHTML =
    polyline(volMa3, '#1f8a1f', 3) + polyline(volMa2, '#c92bd6', 3) + polyline(volMa1, '#f5b51e', 3);

let ticks = '';
for (let i = 13; i < 88; i++) {
    const x = 17 + 12 * i;
    const major = i === 27 || i === 57 || i === 87;
    const color = major ? '#666' : (i < 17 ? '#ddd' : '#aaa');
    ticks += `<rect x="${x - (major ? 1 : 0.75)}" y="1764" width="${major ? 2 : 1.5}" height="${major ? 15 : 9}" fill="${color}"/>`;
}
document.getElementById('vol-ticks').innerHTML = ticks;
```
